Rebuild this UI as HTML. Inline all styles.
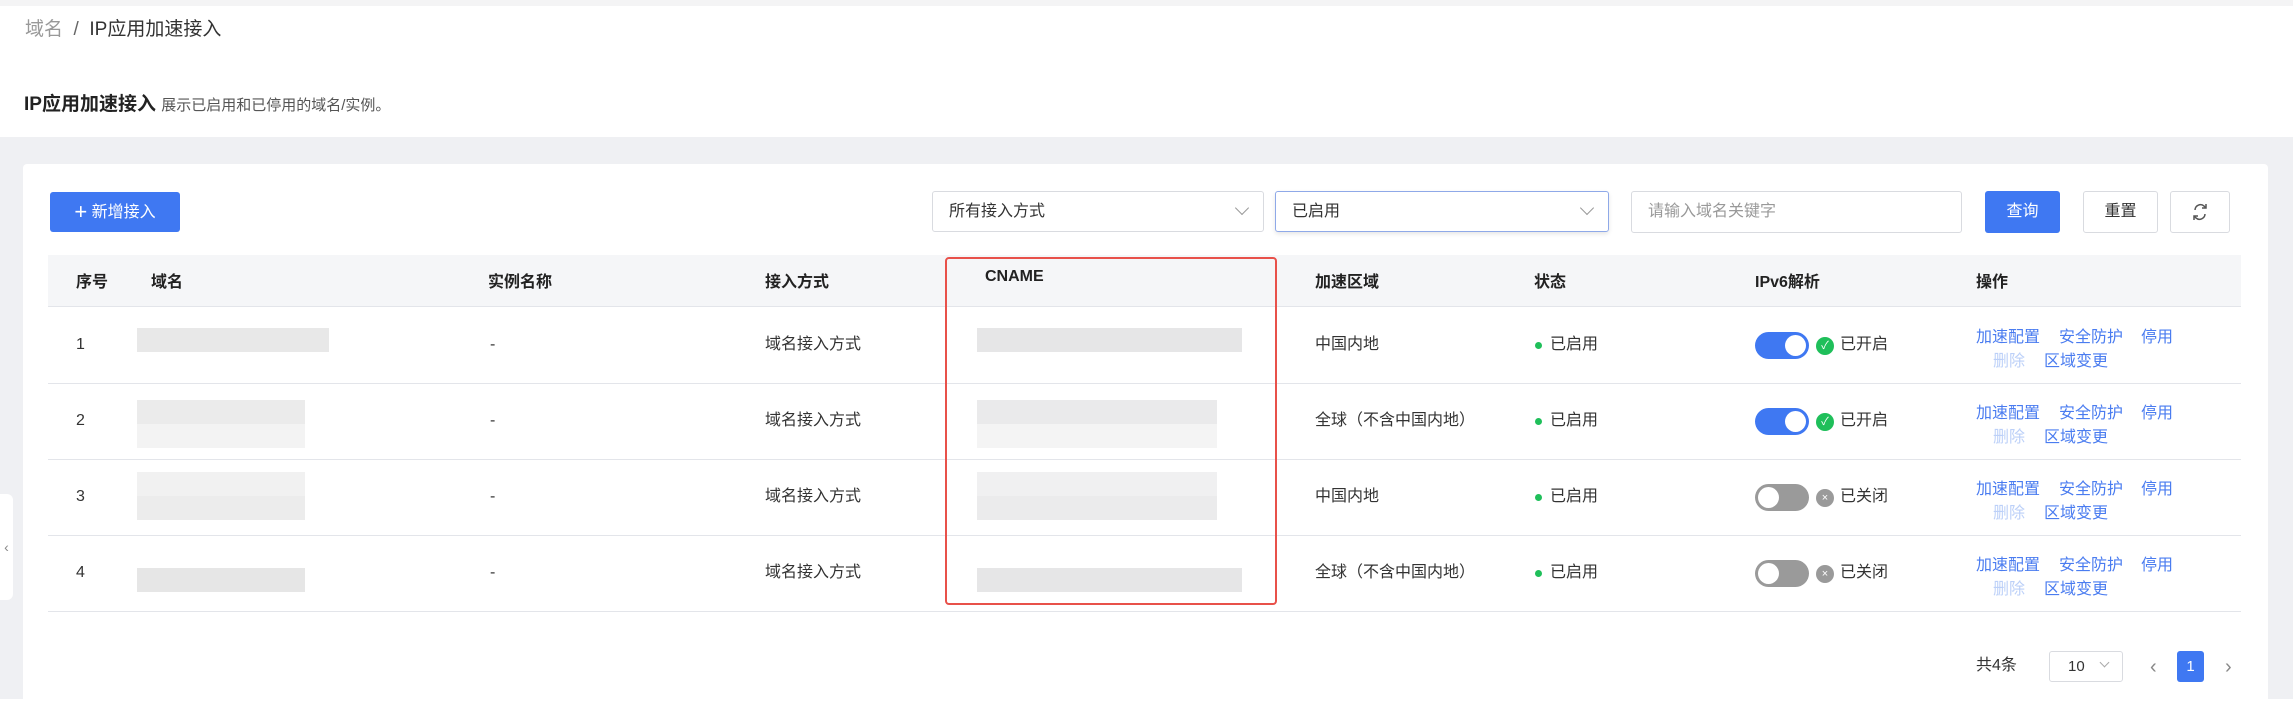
<!DOCTYPE html>
<html><head><meta charset="utf-8"><style>
*{margin:0;padding:0;box-sizing:border-box}
body{width:2293px;height:699px;background:#fff;font-family:"Liberation Sans","Noto Sans CJK SC",sans-serif;color:#333;position:relative;overflow:hidden}
.a{position:absolute;white-space:nowrap}
.t{font-size:16px;line-height:20px}
.th{font-size:16px;font-weight:bold;color:#222}
.bl{position:absolute;background:#e6e6e6}
.lk{color:#4a7cf0;font-size:16px}
.dl{color:#bcd0f8;font-size:16px}
.tog{position:absolute;width:54px;height:27px;border-radius:14px}
.tog i{position:absolute;top:3px;width:21px;height:21px;border-radius:50%;background:#fff}
.ck{position:absolute;width:18px;height:18px;border-radius:50%;color:#fff;font-size:11px;line-height:18px;text-align:center}
.dot{position:absolute;width:7px;height:7px;border-radius:50%;background:#1fbf5a}
.line{position:absolute;left:48px;width:2193px;height:1px;background:#e3e5ea}
</style></head><body>
<div class="a" style="left:0;top:0;width:2293px;height:6px;background:#f4f4f5"></div>
<div class="a" style="left:25px;top:14px;font-size:19px;color:#999">域名 <span style="color:#666">&nbsp;/&nbsp;</span> <span style="color:#333">IP应用加速接入</span></div>
<div class="a" style="left:24px;top:89px;font-size:19px;font-weight:bold;color:#222">IP应用加速接入 <span style="font-size:15px;font-weight:normal;color:#555">展示已启用和已停用的域名/实例。</span></div>
<div class="a" style="left:0;top:137px;width:2293px;height:562px;background:#eff0f3"></div>
<div class="a" style="left:0;top:494px;width:13px;height:106px;background:#fff;border-radius:0 6px 6px 0;color:#888;font-size:14px;line-height:106px;text-align:center">‹</div>
<div class="a" style="left:23px;top:164px;width:2245px;height:540px;background:#fff;border-radius:4px"></div>

<div class="a" style="left:50px;top:192px;width:130px;height:40px;background:#3f78f2;border-radius:3px;color:#fff;font-size:16px;line-height:40px;text-align:center"><span style="font-size:22px;vertical-align:-2px">+</span> 新增接入</div>
<div class="a" style="left:932px;top:191px;width:332px;height:41px;border:1px solid #d9dbe0;border-radius:3px;font-size:16px;line-height:39px;padding-left:16px;color:#333">所有接入方式<span style="position:absolute;right:16px;top:11px;width:10px;height:10px;border-right:1.5px solid #999;border-bottom:1.5px solid #999;transform:rotate(45deg)"></span></div>
<div class="a" style="left:1275px;top:191px;width:334px;height:41px;border:1px solid #8fa9e8;border-radius:3px;font-size:16px;line-height:39px;padding-left:16px;color:#333;box-shadow:0 2px 4px rgba(0,0,0,.1)">已启用<span style="position:absolute;right:16px;top:11px;width:10px;height:10px;border-right:1.5px solid #999;border-bottom:1.5px solid #999;transform:rotate(45deg)"></span></div>
<div class="a" style="left:1631px;top:191px;width:331px;height:42px;border:1px solid #d9dbe0;border-radius:3px;font-size:16px;line-height:40px;padding-left:16px;color:#999">请输入域名关键字</div>
<div class="a" style="left:1985px;top:191px;width:75px;height:42px;background:#3f78f2;border-radius:3px;color:#fff;font-size:16px;line-height:42px;text-align:center">查询</div>
<div class="a" style="left:2083px;top:191px;width:75px;height:42px;border:1px solid #d9dbe0;border-radius:3px;font-size:16px;line-height:40px;text-align:center">重置</div>
<div class="a" style="left:2170px;top:191px;width:60px;height:42px;border:1px solid #d9dbe0;border-radius:3px">
<svg width="60" height="40" viewBox="0 0 60 40" style="position:absolute;left:-1px;top:0"><g fill="none" stroke="#555" stroke-width="1.5"><path d="M25 18a5.5 5.5 0 0 1 9-4l1.5 1.5"/><path d="M35 22a5.5 5.5 0 0 1-9 4l-1.5-1.5"/><path d="M36 12v4h-4M24 28v-4h4"/></g></svg></div>

<div class="a" style="left:48px;top:255px;width:2193px;height:52px;background:#f5f6f8"></div>
<div class="line" style="top:306px"></div>
<div class="a th" style="left:76px;top:268px">序号</div>
<div class="a th" style="left:151px;top:268px">域名</div>
<div class="a th" style="left:488px;top:268px">实例名称</div>
<div class="a th" style="left:765px;top:268px">接入方式</div>
<div class="a th" style="left:985px;top:268px">CNAME</div>
<div class="a th" style="left:1315px;top:268px">加速区域</div>
<div class="a th" style="left:1534px;top:268px">状态</div>
<div class="a th" style="left:1755px;top:268px">IPv6解析</div>
<div class="a th" style="left:1976px;top:268px">操作</div>

<div class="line" style="top:383px"></div>
<div class="line" style="top:459px"></div>
<div class="line" style="top:535px"></div>
<div class="line" style="top:611px"></div>

<div class="bl" style="left:137px;top:328px;width:192px;height:24px;background:#e8e8e8"></div>
<div class="bl" style="left:137px;top:400px;width:168px;height:24px;background:#ebebeb"></div>
<div class="bl" style="left:137px;top:424px;width:168px;height:24px;background:#f3f3f3"></div>
<div class="bl" style="left:137px;top:472px;width:168px;height:24px;background:#f1f1f1"></div>
<div class="bl" style="left:137px;top:496px;width:168px;height:24px;background:#ececec"></div>
<div class="bl" style="left:137px;top:568px;width:168px;height:24px;background:#e6e6e6"></div>
<div class="bl" style="left:977px;top:328px;width:265px;height:24px;background:#e6e6e7"></div>
<div class="bl" style="left:977px;top:400px;width:240px;height:24px;background:#eaeaeb"></div>
<div class="bl" style="left:977px;top:424px;width:240px;height:24px;background:#f4f4f4"></div>
<div class="bl" style="left:977px;top:472px;width:240px;height:24px;background:#f0f0f1"></div>
<div class="bl" style="left:977px;top:496px;width:240px;height:24px;background:#ebebec"></div>
<div class="bl" style="left:977px;top:568px;width:265px;height:24px;background:#e6e6e7"></div>

<div class="a" style="left:945px;top:257px;width:332px;height:348px;border:2px solid #e8514a;border-radius:4px"></div>

<div class="a t" style="left:76px;top:335px">1</div><div class="a t" style="left:76px;top:411px">2</div><div class="a t" style="left:76px;top:487px">3</div><div class="a t" style="left:76px;top:563px">4</div>
<div class="a t" style="left:490px;top:335px">-</div><div class="a t" style="left:490px;top:411px">-</div><div class="a t" style="left:490px;top:487px">-</div><div class="a t" style="left:490px;top:563px">-</div>
<div class="a t" style="left:765px;top:335px">域名接入方式</div><div class="a t" style="left:765px;top:411px">域名接入方式</div><div class="a t" style="left:765px;top:487px">域名接入方式</div><div class="a t" style="left:765px;top:563px">域名接入方式</div>
<div class="a t" style="left:1315px;top:335px">中国内地</div><div class="a t" style="left:1315px;top:411px">全球（不含中国内地）</div><div class="a t" style="left:1315px;top:487px">中国内地</div><div class="a t" style="left:1315px;top:563px">全球（不含中国内地）</div>

<div class="dot" style="left:1535px;top:342px"></div><div class="a t" style="left:1550px;top:335px">已启用</div>
<div class="dot" style="left:1535px;top:418px"></div><div class="a t" style="left:1550px;top:411px">已启用</div>
<div class="dot" style="left:1535px;top:494px"></div><div class="a t" style="left:1550px;top:487px">已启用</div>
<div class="dot" style="left:1535px;top:570px"></div><div class="a t" style="left:1550px;top:563px">已启用</div>

<div class="tog" style="left:1755px;top:332px;background:#3f78f2"><i style="left:30px"></i></div><div class="ck" style="left:1816px;top:337px;background:#1fbf5a">✓</div><div class="a t" style="left:1840px;top:335px">已开启</div>
<div class="tog" style="left:1755px;top:408px;background:#3f78f2"><i style="left:30px"></i></div><div class="ck" style="left:1816px;top:413px;background:#1fbf5a">✓</div><div class="a t" style="left:1840px;top:411px">已开启</div>
<div class="tog" style="left:1755px;top:484px;background:#9a9a9a"><i style="left:3px"></i></div><div class="ck" style="left:1816px;top:489px;background:#9a9a9a">×</div><div class="a t" style="left:1840px;top:487px">已关闭</div>
<div class="tog" style="left:1755px;top:560px;background:#9a9a9a"><i style="left:3px"></i></div><div class="ck" style="left:1816px;top:565px;background:#9a9a9a">×</div><div class="a t" style="left:1840px;top:563px">已关闭</div>

<div class="a lk" style="left:1976px;top:323px">加速配置</div><div class="a lk" style="left:2059px;top:323px">安全防护</div><div class="a lk" style="left:2141px;top:323px">停用</div><div class="a dl" style="left:1993px;top:347px">删除</div><div class="a lk" style="left:2044px;top:347px">区域变更</div>
<div class="a lk" style="left:1976px;top:399px">加速配置</div><div class="a lk" style="left:2059px;top:399px">安全防护</div><div class="a lk" style="left:2141px;top:399px">停用</div><div class="a dl" style="left:1993px;top:423px">删除</div><div class="a lk" style="left:2044px;top:423px">区域变更</div>
<div class="a lk" style="left:1976px;top:475px">加速配置</div><div class="a lk" style="left:2059px;top:475px">安全防护</div><div class="a lk" style="left:2141px;top:475px">停用</div><div class="a dl" style="left:1993px;top:499px">删除</div><div class="a lk" style="left:2044px;top:499px">区域变更</div>
<div class="a lk" style="left:1976px;top:551px">加速配置</div><div class="a lk" style="left:2059px;top:551px">安全防护</div><div class="a lk" style="left:2141px;top:551px">停用</div><div class="a dl" style="left:1993px;top:575px">删除</div><div class="a lk" style="left:2044px;top:575px">区域变更</div>

<div class="a t" style="left:1976px;top:656px">共4条</div>
<div class="a" style="left:2049px;top:651px;width:74px;height:31px;border:1px solid #d9dbe0;border-radius:3px;font-size:15px;line-height:29px;padding-left:18px">10<span style="position:absolute;right:14px;top:7px;width:7px;height:7px;border-right:1px solid #aaa;border-bottom:1px solid #aaa;transform:rotate(45deg)"></span></div>
<div class="a" style="left:2150px;top:656px;font-size:20px;color:#888">‹</div>
<div class="a" style="left:2177px;top:651px;width:27px;height:31px;background:#3f78f2;border-radius:3px;color:#fff;font-size:15px;line-height:31px;text-align:center">1</div>
<div class="a" style="left:2225px;top:656px;font-size:20px;color:#888">›</div>
</body></html>
